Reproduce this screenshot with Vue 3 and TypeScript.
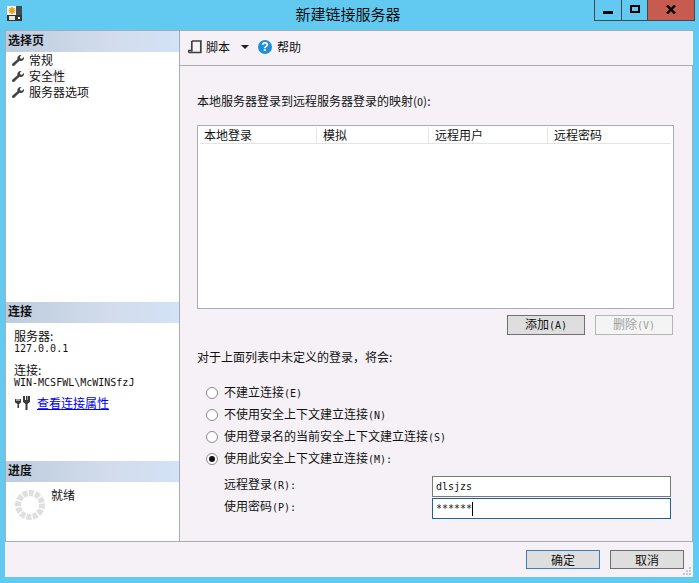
<script setup lang="ts">
const pages = ['常规', '安全性', '服务器选项']
const cols = [
  { t: '本地登录', w: 117 },
  { t: '模拟', w: 110 },
  { t: '远程用户', w: 117 },
  { t: '远程密码', w: 121 },
]
const radios = [
  { t: '不建立连接', k: '(E)', on: false },
  { t: '不使用安全上下文建立连接', k: '(N)', on: false },
  { t: '使用登录名的当前安全上下文建立连接', k: '(S)', on: false },
  { t: '使用此安全上下文建立连接', k: '(M):', on: true },
]
</script>

<template>
  <div class="win">
    <header class="titlebar">
      <svg class="appicon" width="15" height="15" viewBox="0 0 15 15">
        <rect x="0" y="0" width="15" height="15" fill="#f6f6f2" />
        <rect x="9" y="0" width="6" height="9" fill="#3f4c52" />
        <path d="M5 1v7M1.500 4.500h7M2.500 2l5 5M7.500 2l-5 5" stroke="#f0a020" stroke-width="1.600" />
        <rect x="0" y="9" width="15" height="6" fill="#333" />
        <rect x="2" y="10" width="6" height="4" fill="#e4e4e4" />
        <rect x="11" y="11" width="2" height="2" fill="#fff" />
      </svg>
      <div class="title">新建链接服务器</div>
      <div class="winbtns">
        <div class="wb min"><i></i></div>
        <div class="wb max"><i></i></div>
        <div class="wb close">
          <svg width="10" height="9" viewBox="0 0 10 9"><path d="M1 0.500l8 8M9 0.500l-8 8" stroke="#000" stroke-width="2.400" /></svg>
        </div>
      </div>
    </header>

    <div class="client">
      <div class="main">
        <aside class="side">
          <div class="sec pages">
            <div class="sec-h">选择页</div>
            <ul class="list">
              <li v-for="(p, i) in pages" :key="p">
                <svg width="12" height="11" viewBox="0 0 12 11"><path d="M12 1.800a3.400 3.400 0 0 1-4.600 3.900L2.500 10.600a1.300 1.300 0 0 1-2-.1 1.300 1.300 0 0 1 0-1.900l4.900-4.300A3.400 3.400 0 0 1 9.500.2L7.800 2l.7 1.500 1.600.2z" fill="#454545" /></svg>
                <span :class="{ hl: i === 1 }">{{ p }}</span>
              </li>
            </ul>
          </div>
          <div class="sec conn">
            <div class="sec-h">连接</div>
            <div class="conn-b">
              <div class="lbl">服务器:</div>
              <div class="val">127.0.0.1</div>
              <div class="lbl second">连接:</div>
              <div class="val">WIN-MCSFWL\McWINSfzJ</div>
              <div class="link-row">
                <svg width="15" height="14" viewBox="0 0 15 14">
                  <path d="M0 3h1.500v2h1V3h1v2h1V3H6v3.500L4 8v4H2.500V8L0 6.500zM8 0h2v4h1V0h1.500v4h.5V0H15v6l-2.500 2v6h-2V8L8 6z" fill="#3a3a3a" />
                </svg>
                <a class="link">查看连接属性</a>
              </div>
            </div>
          </div>
          <div class="sec prog">
            <div class="sec-h">进度</div>
            <div class="prog-b">
              <svg class="spin" width="30" height="30" viewBox="0 0 30 30">
                <circle class="ring" cx="15" cy="15" r="12" />
              </svg>
              <span class="ready">就绪</span>
            </div>
          </div>
        </aside>

        <section class="pane">
          <div class="toolbar">
            <svg class="ti" width="15" height="14" viewBox="0 0 15 14">
              <path d="M3.800 1h10M12.800 1v11.500H5M3.800 1v10.500M0.500 12.500h7M0.500 12.500v-2h3" fill="none" stroke="#3f3f3f" stroke-width="1.700" />
            </svg>
            <span class="tt">脚本</span>
            <span class="caret"></span>
            <span class="help">?</span>
            <span class="tt">帮助</span>
          </div>
          <div class="form">
            <p class="cap">本地服务器登录到远程服务器登录的映射(<span class="l">O</span>):</p>
            <div class="table">
              <div class="thead">
                <div v-for="c in cols" :key="c.t" class="th" :style="{ width: c.w + 'px' }">{{ c.t }}</div>
              </div>
            </div>
            <div class="tbtns">
              <button class="btn">添加<span class="l">(A)</span></button>
              <button class="btn off">删除<span class="l">(V)</span></button>
            </div>
            <p class="cap2">对于上面列表中未定义的登录，将会:</p>
            <div class="radios">
              <label v-for="r in radios" :key="r.t" class="radio">
                <span class="dot" :class="{ on: r.on }"></span>
                <span>{{ r.t }}<span class="l">{{ r.k }}</span></span>
              </label>
            </div>
            <div class="fields">
              <div class="field">
                <span class="flabel">远程登录<span class="l">(R):</span></span>
                <div class="input"><span class="l">dlsjzs</span></div>
              </div>
              <div class="field">
                <span class="flabel">使用密码<span class="l">(P):</span></span>
                <div class="input focus"><span class="l">******</span><i class="cursor"></i></div>
              </div>
            </div>
          </div>
        </section>
      </div>

      <footer class="foot">
        <button class="btn fb def">确定</button>
        <button class="btn fb">取消</button>
        <svg class="grip" width="10" height="10" viewBox="0 0 10 10">
          <path d="M7 1h2v2H7zM4 4h2v2H4zM7 4h2v2H7zM1 7h2v2H1zM4 7h2v2H4zM7 7h2v2H7z" fill="#c9c9cc" />
        </svg>
      </footer>
    </div>
  </div>
</template>

<style>
html, body { margin: 0; padding: 0; background: #62caf1; }
</style>

<style scoped>
.win {
  width: 699px;
  height: 583px;
  box-sizing: border-box;
  padding: 0 6px 6px 5px;
  background: #62caf1;
  display: flex;
  flex-direction: column;
  overflow: hidden;
  font: 12px/16px "Noto Sans CJK SC", "Liberation Sans", sans-serif;
  color: #111;
}
.l { font-family: "DejaVu Sans Mono", monospace; font-size: 10px; }
.titlebar { height: 30px; flex: none; display: flex; position: relative; }
.appicon { margin: 6px 0 0 2px; }
.title {
  position: absolute;
  left: 0;
  right: 0;
  top: 4px;
  padding-right: 2px;
  text-align: center;
  font-size: 15px;
  line-height: 20px;
  color: #111;
}
.winbtns {
  margin-left: auto;
  margin-right: -2px;
  display: flex;
  height: 21px;
  box-sizing: border-box;
  border: 1px solid #3f4a50;
  border-top: 0;
  position: relative;
}
.wb { display: flex; align-items: center; justify-content: center; box-sizing: border-box; }
.min { width: 27px; border-right: 1px solid #3f4a50; }
.min i { width: 10px; height: 3px; background: #000; margin-top: 4px; }
.max { width: 26px; border-right: 1px solid #3f4a50; }
.max i { width: 6px; height: 4px; border: 2px solid #000; margin-bottom: 2px; }
.close { width: 46px; background: #c75b50; }
.close svg { margin-bottom: 2px; }

.client {
  flex: 1;
  min-height: 0;
  display: flex;
  flex-direction: column;
  background: #f5f1f6;
}
.main {
  flex: 1;
  min-height: 0;
  display: flex;
  border-top: 1px solid #aaabb4;
  border-bottom: 1px solid #aaabb4;
}
.side {
  width: 173px;
  flex: none;
  background: #fff;
  border-left: 1px solid #aaabb4;
  border-right: 1px solid #aaabb4;
  display: flex;
  flex-direction: column;
}
.sec-h {
  height: 21px;
  line-height: 18px;
  padding-left: 2px;
  font-weight: 700;
  font-size: 12px;
  color: #111;
  background: linear-gradient(90deg, #bccde0 0%, #c8d4e4 30%, #d2dcec 60%, #d3e2f6 100%);
}
.pages { flex: 1; }
.list { list-style: none; margin: 0; padding: 0; }
.list li { height: 16px; display: flex; align-items: center; padding-left: 6px; gap: 5px; }
.hl { background: #f6f6f6; padding: 0 1px; margin-left: -1px; }
.conn { height: 159px; flex: none; }
.conn-b { padding: 6px 0 0 8px; }
.lbl { line-height: 13px; }
.val { font-family: "DejaVu Sans Mono", monospace; font-size: 10px; line-height: 12px; white-space: nowrap; padding-top: 1px; }
.second { margin-top: 8px; }
.link-row { display: flex; align-items: center; gap: 7px; margin-top: 6px; padding-left: 1px; }
.link { color: #0000ee; text-decoration: underline; }
.prog { height: 80px; flex: none; }
.prog-b { display: flex; padding: 5px 0 0 9px; }
.spin { margin-top: 3px; }
.ring {
  fill: none;
  stroke: #dfdfe1;
  stroke-width: 6;
  stroke-dasharray: 4.9 1.38;
  transform: rotate(-7deg);
  transform-origin: 15px 15px;
}
.ready { margin-left: 6px; }

.pane { flex: 1; min-width: 0; display: flex; flex-direction: column; border-right: 1px solid #aaabb4; }
.toolbar {
  height: 35px;
  flex: none;
  box-sizing: border-box;
  border-bottom: 1px solid #aaabb4;
  display: flex;
  align-items: center;
  padding: 0 0 2px 8px;
  margin-right: -1px;
  background: #f5f1f6;
}
.ti { margin-right: 3px; }
.tt { line-height: 16px; }
.caret {
  width: 0;
  height: 0;
  border: 4px solid transparent;
  border-top: 4px solid #222;
  border-bottom: 0;
  margin: 0 9px 0 11px;
}
.help {
  width: 14px;
  height: 14px;
  border-radius: 50%;
  background: #1f8fd8;
  color: #fff;
  font: 700 12px/14px "Liberation Sans", sans-serif;
  text-align: center;
  margin-right: 5px;
}
.form { flex: 1; padding: 27px 18px 0 17px; }
.cap { margin: 0; height: 32px; line-height: 16px; white-space: nowrap; }
.table {
  height: 184px;
  box-sizing: border-box;
  border: 1px solid #aaabb4;
  background: #fff;
  padding: 1px 2px 0;
}
.thead { display: flex; height: 16px; border-bottom: 1px solid #e4e4e6; gap: 2px; }
.th { line-height: 16px; padding-left: 4px; box-sizing: border-box; flex: none; white-space: nowrap; background: #fff; border-right: 1px solid #e4e4e6; }
.th:last-child { border-right: 0; }
.tbtns { display: flex; justify-content: flex-end; gap: 10px; margin-top: 6px; padding-right: 1px; }
.btn {
  width: 78px;
  height: 20px;
  padding: 0;
  box-sizing: border-box;
  border: 1px solid #707070;
  background: #dedede;
  font: inherit;
  color: #111;
  line-height: 16px;
}
.btn.off { border-color: #b5b5b5; background: #f4f4f4; color: #a0a0a0; }
.cap2 { margin: 14px 0 0; line-height: 16px; }
.radios { margin-top: 20px; display: flex; flex-direction: column; gap: 6px; }
.radio { display: flex; align-items: center; height: 16px; padding-left: 9px; gap: 6px; white-space: nowrap; }
.dot {
  width: 12px;
  height: 12px;
  box-sizing: border-box;
  border: 1px solid #8a8a8a;
  border-radius: 50%;
  background: #fff;
  position: relative;
  flex: none;
}
.dot.on::after {
  content: "";
  position: absolute;
  left: 2px;
  top: 2px;
  width: 6px;
  height: 6px;
  border-radius: 50%;
  background: #111;
}
.fields { margin-top: 9px; display: flex; flex-direction: column; gap: 1px; }
.field { display: flex; align-items: center; height: 21px; padding-left: 27px; }
.flabel { width: 208px; flex: none; white-space: nowrap; margin-top: -4px; }
.input {
  width: 239px;
  height: 21px;
  box-sizing: border-box;
  border: 1px solid #7a7a7a;
  background: #fff;
  padding-left: 3px;
  line-height: 18px;
  display: flex;
  align-items: center;
}
.input.focus { border-color: #1e6396; }
.cursor { width: 1px; height: 14px; background: #000; }

.foot {
  height: 35px;
  flex: none;
  display: flex;
  justify-content: flex-end;
  gap: 10px;
  padding: 8px 9px 0 0;
  box-sizing: border-box;
  position: relative;
}
.fb { width: 74px; height: 19px; }
.def { border-color: #3a80b8; }
.grip { position: absolute; right: 1px; bottom: 1px; }
</style>
